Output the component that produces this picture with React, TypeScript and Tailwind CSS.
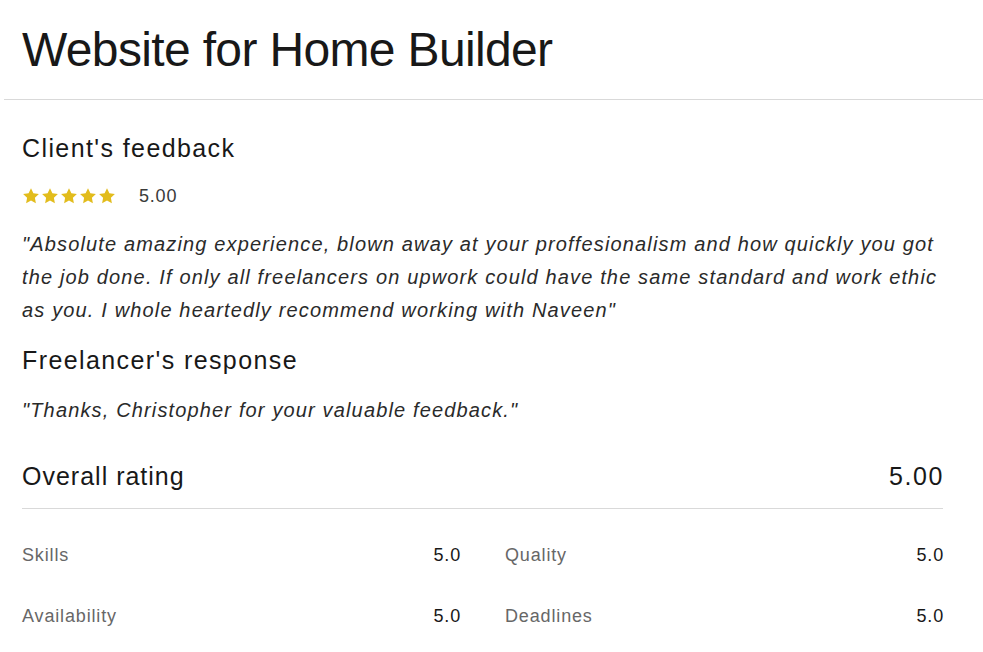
const Star = () => (
  <svg viewBox="0 0 24 24" className="h-[18px] w-[18px]" fill="#e2bc1c">
    <path d="M12 1.5l3.2 6.7 7.3 1-5.3 5.1 1.3 7.3L12 18.1l-6.5 3.5 1.3-7.3-5.3-5.1 7.3-1z" />
  </svg>
);

const Rating = ({ label, value }: { label: string; value: string }) => (
  <div className="flex items-center justify-between h-[61px]">
    <span className="text-[#676767] text-[18px] tracking-[0.85px]">{label}</span>
    <span className="text-[#181818] text-[18px] tracking-[0.85px] -mr-[1px]">{value}</span>
  </div>
);

export default function App() {
  return (
    <div
      className="w-[983px] h-[652px] bg-white text-[#181818] overflow-hidden"
      style={{ fontFamily: "'Liberation Sans', Arial, sans-serif" }}
    >
      <div className="px-[22px] pt-[22px] h-[99px]">
        <h1 className="text-[48px] leading-[56px] tracking-[-0.65px]">Website for Home Builder</h1>
      </div>
      <div className="ml-[4px] border-t border-[#d9d9d9]" />
      <div className="px-[22px] w-[965px]">
        <h2 className="mt-[32px] text-[25px] leading-[32px] tracking-[1.4px]">Client's feedback</h2>
        <div className="mt-[22px] h-[20px] flex items-center gap-[23px]">
          <div className="flex gap-[1px]">
            <Star />
            <Star />
            <Star />
            <Star />
            <Star />
          </div>
          <span className="text-[18px] tracking-[0.8px] text-[#3a3a3a]">5.00</span>
        </div>
        <p className="mt-[22px] italic text-[20px] leading-[33px] tracking-[1.15px] text-[#2a2a2a]">
          "Absolute amazing experience, blown away at your proffesionalism and how quickly you got the job done. If only all freelancers on upwork could have the same standard and work ethic as you. I whole heartedly recommend working with Naveen"
        </p>
        <h2 className="mt-[17px] text-[25px] leading-[32px] tracking-[1.4px]">Freelancer's response</h2>
        <p className="mt-[21px] italic text-[20px] leading-[26px] tracking-[1.15px] text-[#2a2a2a]">
          "Thanks, Christopher for your valuable feedback."
        </p>
        <div className="w-[921px]">
          <div className="mt-[37px] flex items-center justify-between pb-[16px] border-b border-[#d9d9d9]">
            <span className="text-[25px] leading-[32px] tracking-[1px]">Overall rating</span>
            <span className="text-[25px] leading-[32px] tracking-[1.6px] -mr-[1px]">5.00</span>
          </div>
          <div className="mt-[16px] grid grid-cols-2 gap-x-[45px]">
            <Rating label="Skills" value="5.0" />
            <Rating label="Quality" value="5.0" />
            <Rating label="Availability" value="5.0" />
            <Rating label="Deadlines" value="5.0" />
          </div>
        </div>
      </div>
    </div>
  );
}
